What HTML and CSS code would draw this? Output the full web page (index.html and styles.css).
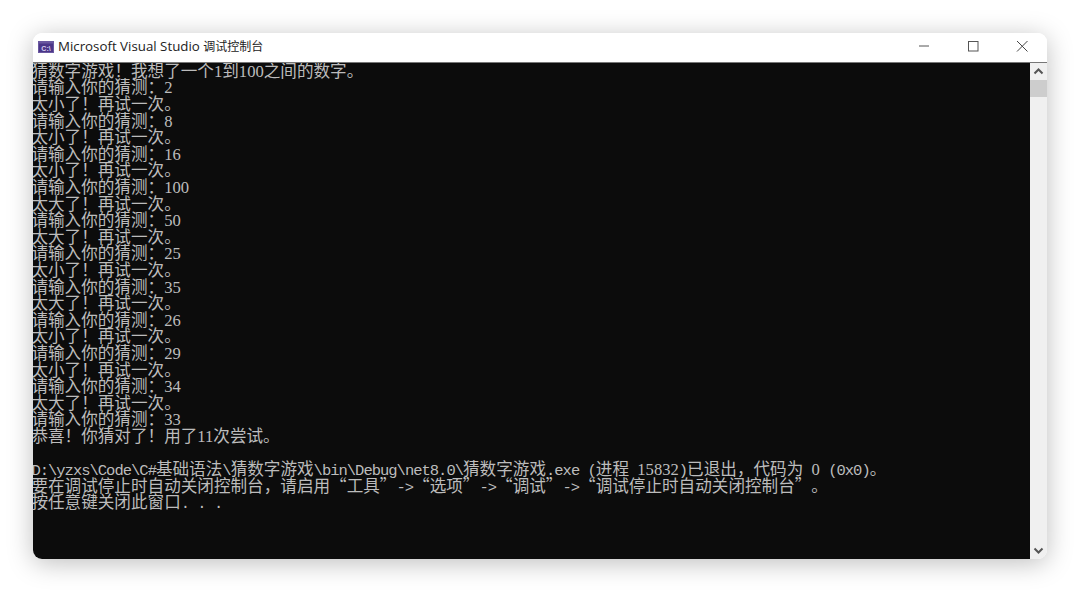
FILE: index.html
```html
<!DOCTYPE html>
<html lang="zh-CN">
<head>
<meta charset="utf-8">
<title>Microsoft Visual Studio 调试控制台</title>
<link rel="stylesheet" href="styles.css">
</head>
<body>
<div class="window">
  <header class="titlebar">
    <svg class="app-icon" width="16" height="12" viewBox="0 0 16 12"><rect width="16" height="12" fill="#6a58a0"/><rect x="1" y="2.500" width="14" height="8.500" fill="#4b3688"/><text x="8" y="9.600" class="app-icon-text" text-anchor="middle">C:\</text></svg>
    <span class="title">Microsoft Visual Studio <span class="title-cjk">调试控制台</span></span>
    <div class="controls">
      <button class="ctl"><svg width="12" height="12" viewBox="0 0 12 12"><path d="M1 6h10" stroke="#555" fill="none"/></svg></button>
      <button class="ctl"><svg width="12" height="12" viewBox="0 0 12 12"><rect x="1.500" y="1.500" width="9.500" height="9.500" stroke="#555" fill="none"/></svg></button>
      <button class="ctl"><svg width="12" height="12" viewBox="0 0 12 12"><path d="M1 1l10.500 10.500M11.500 1L1 11.500" stroke="#444" fill="none"/></svg></button>
    </div>
  </header>
  <div class="body">
    <main class="console">
      <div class="line">猜数字游戏<u>！</u>我想了一个<b>1</b>到<b>100</b>之间的数字。</div>
      <div class="line">请输入你的猜测<u>：</u><b>2</b></div>
      <div class="line">太小了<u>！</u>再试一次。</div>
      <div class="line">请输入你的猜测<u>：</u><b>8</b></div>
      <div class="line">太小了<u>！</u>再试一次。</div>
      <div class="line">请输入你的猜测<u>：</u><b>16</b></div>
      <div class="line">太小了<u>！</u>再试一次。</div>
      <div class="line">请输入你的猜测<u>：</u><b>100</b></div>
      <div class="line">太大了<u>！</u>再试一次。</div>
      <div class="line">请输入你的猜测<u>：</u><b>50</b></div>
      <div class="line">太大了<u>！</u>再试一次。</div>
      <div class="line">请输入你的猜测<u>：</u><b>25</b></div>
      <div class="line">太小了<u>！</u>再试一次。</div>
      <div class="line">请输入你的猜测<u>：</u><b>35</b></div>
      <div class="line">太大了<u>！</u>再试一次。</div>
      <div class="line">请输入你的猜测<u>：</u><b>26</b></div>
      <div class="line">太小了<u>！</u>再试一次。</div>
      <div class="line">请输入你的猜测<u>：</u><b>29</b></div>
      <div class="line">太小了<u>！</u>再试一次。</div>
      <div class="line">请输入你的猜测<u>：</u><b>34</b></div>
      <div class="line">太大了<u>！</u>再试一次。</div>
      <div class="line">请输入你的猜测<u>：</u><b>33</b></div>
      <div class="line">恭喜<u>！</u>你猜对了<u>！</u>用了<b>11</b>次尝试。</div>
      <div class="line"></div>
      <div class="line"><i>D:\yzxs\Code\C#</i>基础语法<i>\</i>猜数字游戏<i>\bin\Debug\net8.0\</i>猜数字游戏<i>.exe (</i>进程<i> </i><b>15832</b><i>)</i>已退出<u>，</u>代码为<i> </i><b>0</b><i> (0x0)</i>。</div>
      <div class="line">要在调试停止时自动关闭控制台<u>，</u>请启用“工具”<i>-&gt;</i>“选项”<i>-&gt;</i>“调试”<i>-&gt;</i>“调试停止时自动关闭控制台”。</div>
      <div class="line">按任意键关闭此窗口<i>. . .</i></div>
    </main>
    <aside class="scrollbar">
      <svg class="arrow" width="17" height="17" viewBox="0 0 17 17"><path d="M4.500 10.500l4-4 4 4" stroke="#555" stroke-width="2" fill="none"/></svg>
      <div class="thumb"></div>
      <div class="track"></div>
      <svg class="arrow" width="17" height="17" viewBox="0 0 17 17"><path d="M4.500 6.500l4 4 4-4" stroke="#555" stroke-width="2" fill="none"/></svg>
    </aside>
  </div>
</div>
</body>
</html>
```

FILE: styles.css
```css
html, body { margin: 0; padding: 0; background: #fff; }
body { width: 1080px; height: 592px; overflow: hidden; padding: 33px; box-sizing: border-box; }
.window {
  width: 1014px; height: 526px; display: flex; flex-direction: column;
  background: #fff; border-radius: 9px; overflow: hidden;
  box-shadow: 0 4px 26px rgba(0,0,0,.26);
}
.titlebar {
  height: 29px; flex: none; display: flex; align-items: center; padding-left: 5px;
  border-bottom: 1px solid #777; background: #fff;
}
.app-icon { flex: none; margin-right: 4px; margin-bottom: 2px; }
.app-icon-text { font: bold 7px "Liberation Sans", sans-serif; fill: #d8d0ee; }
.title { font: 13.3px/16px "Open Sans", "Noto Sans CJK SC", sans-serif; color: #222; white-space: nowrap; margin-bottom: 3px; }
.title-cjk { font-size: 12px; }
.controls { margin-left: auto; margin-right: 1px; display: flex; }
.ctl {
  width: 49px; height: 29px; padding: 0 0 3px; border: 0; background: transparent;
  display: flex; align-items: center; justify-content: center;
}
.body { flex: 1; display: flex; min-height: 0; }
.console {
  flex: 1; background: #0c0c0c; color: #bcbcbc; overflow: hidden;
  font: 16.6px "Noto Sans CJK SC", sans-serif;
  text-spacing-trim: space-all;
  font-kerning: none;
}
.line { height: 16.6px; line-height: 16.6px; white-space: pre; margin-left: -1.6px; }
.line:first-child { margin-top: -1.2px; }
.line i { font: normal 15.5px/16.6px "Liberation Mono", monospace; letter-spacing: -1px; }
.line b { font: normal 16.6px/16.6px "Liberation Serif", serif; }
.line u { text-decoration: none; font-family: "Noto Sans CJK TC", sans-serif; }
.scrollbar { width: 17px; flex: none; background: #f0f0f0; display: flex; flex-direction: column; }
.arrow { flex: none; display: block; }
.thumb { height: 17px; flex: none; background: #cdcdcd; }
.track { flex: 1; }
```
